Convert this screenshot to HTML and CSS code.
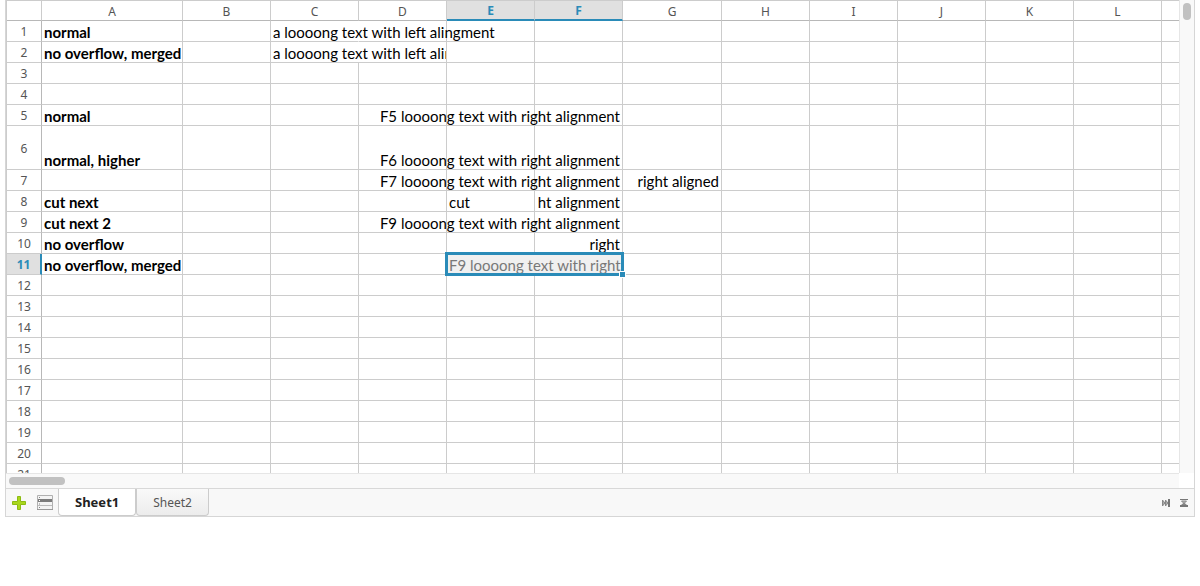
FILE: index.html
```html
<!DOCTYPE html>
<html lang="en">
<head>
<meta charset="utf-8">
<title>Spreadsheet</title>
<link rel="stylesheet" href="styles.css">
</head>
<body>
<main class="book">
  <div class="work">
    <div class="view">
      <table class="grid">
        <colgroup id="cols"></colgroup>
        <thead><tr id="head"></tr></thead>
        <tbody id="rows"></tbody>
      </table>
    </div>
    <div class="vscroll"><div class="vthumb"></div></div>
  </div>
  <div class="hrow">
    <div class="hscroll"><div class="hthumb"></div></div>
  </div>
  <footer class="bar">
    <button class="tool" aria-label="Add sheet">
      <svg width="14" height="14" viewBox="0 0 14 14"><path d="M5.500 .5h3v5h5v3h-5v5h-3v-5h-5v-3h5z" fill="#a9d71c" stroke="#8dbb12"/></svg>
    </button>
    <button class="tool list" aria-label="Sheet list">
      <svg width="16" height="15" viewBox="0 0 16 15"><path d="M.5.5h15v14H.5z" fill="#f4f4f4" stroke="#b0b0b0"/><path d="M1 4h14v3H1z" fill="#7c7c7c"/><path d="M1 10.500h14" stroke="#bbb"/><path d="M2 2.500h1M2 9h1M2 12.500h1" stroke="#888"/><path d="M2 5.500h1" stroke="#fff"/><path d="M0 14.500h16" stroke="#999"/></svg>
    </button>
    <nav class="tabs">
      <button class="tab active">Sheet1</button>
      <button class="tab">Sheet2</button>
    </nav>
    <div class="right">
      <button class="tool" aria-label="Last sheet">
        <svg width="8" height="8" viewBox="0 0 8 8"><path d="M.5 1v6L3 4zM3.500 1v6L6 4z" fill="#aaa" stroke="#888"/><path d="M7 0v8" stroke="#777" stroke-width="2"/></svg>
      </button>
      <button class="tool" aria-label="Collapse">
        <svg width="8" height="8" viewBox="0 0 8 8"><path d="M0 .5h8" stroke="#777"/><path d="M1.500 2h5L4 4.500z" fill="#bbb" stroke="#888"/><path d="M4 3.500L7 6H1z" fill="#888"/><path d="M0 7h8" stroke="#777" stroke-width="2"/></svg>
      </button>
    </div>
  </footer>
</main>
<script src="script.js"></script>
</body>
</html>
```

FILE: styles.css
```css
* { box-sizing: border-box; }

body {
  margin: 0;
  padding: 0 5px;
  background: #fff;
  font-family: "Noto Sans", sans-serif;
  font-size: 12px;
  color: #555;
}

button {
  margin: 0;
  padding: 0;
  border: 0;
  background: none;
  font: inherit;
  color: inherit;
}

.book {
  display: flex;
  flex-direction: column;
  height: calc(100vh - 69px);
  min-height: 200px;
  border: 1px solid #d6d6d6;
  border-top: 0;
  background: #f8f8f8;
}

.work {
  display: flex;
  flex: 1;
  min-height: 0;
}

.view {
  flex: 1;
  min-width: 0;
  overflow: hidden;
  border-left: 1px solid #ccc;
  background: #fff;
}

.vscroll {
  width: 15px;
  padding: 3px 3px 0;
  border-left: 1px solid #e6e6e6;
  background: #f9f9f9;
}

.vthumb {
  width: 8px;
  height: 17px;
  border-radius: 4px;
  background: #c1c1c1;
}

.hrow {
  padding-right: 15px;
  background: #fff;
}

.hscroll {
  height: 15px;
  padding: 3px 3px 0;
  border-top: 1px solid #e6e6e6;
  background: #f9f9f9;
}

.hthumb {
  width: 56px;
  height: 8px;
  border-radius: 4px;
  background: #c1c1c1;
}

.grid {
  width: 1243px;
  table-layout: fixed;
  border-collapse: separate;
  border-spacing: 0;
}

.grid th,
.grid td {
  height: 21px;
  padding: 0;
  border-right: 1px solid #ccc;
  border-bottom: 1px solid #ccc;
  line-height: 20px;
}

.grid th {
  font-weight: 400;
  text-align: center;
}

.grid thead th {
  padding-top: 2px;
  border-top: 1px solid #ccc;
  border-bottom-color: #b8b8b8;
  line-height: 16px;
}

.grid tbody th {
  padding-top: 1px;
  border-right-color: #b8b8b8;
  line-height: 19px;
}

.grid th.on {
  background: #e0e0e0;
  color: #2a8bb8;
  font-weight: 700;
}

.grid thead th.on { border-bottom: 2px solid #2a8bb8; }
.grid tbody th.on { border-right: 2px solid #2a8bb8; }

.grid td {
  vertical-align: bottom;
  font-family: Lato, sans-serif;
  font-size: 15px;
  color: #000;
}

.grid tr.tall > * { height: 44px; }

.grid td.open { border-right-color: transparent; }
.grid td.current { position: relative; }

.text {
  display: flex;
  height: 20px;
  padding: 1px 2px 0;
  line-height: 20px;
  white-space: nowrap;
}

.bold { font-weight: 700; }
.right-text { justify-content: flex-end; }
.cut { overflow: hidden; }

.picked {
  position: absolute;
  inset: -2px;
  border: 3px solid #2a8bb8;
  background: rgba(128, 128, 128, .12);
}

.handle {
  position: absolute;
  right: -4px;
  bottom: -4px;
  width: 5px;
  height: 5px;
  outline: 1px solid #fff;
  background: #2a8bb8;
}

.muted { color: #777; }

.bar {
  display: flex;
  height: 28px;
  padding-left: 5px;
  border-top: 1px solid #d8d8d8;
}

.tool {
  display: flex;
  align-items: center;
  justify-content: center;
  width: 16px;
  margin-right: 10px;
}

.list { margin-right: 5px; }

.tabs {
  display: flex;
  height: 28px;
}

.tab {
  height: 27px;
  padding: 0 16px;
  border: 1px solid #ccc;
  border-top: 0;
  border-radius: 0 0 4px 4px;
  background: linear-gradient(#f9f9f9, #ececec);
}

.tab.active {
  background: #fff;
  color: #222;
  font-size: 13px;
  font-weight: 700;
}

.right {
  display: flex;
  gap: 2px;
  margin-left: auto;
  padding-right: 2px;
}

.right .tool { margin: 0; }
```

FILE: script.js
```js
const letters = "ABCDEFGHIJKL".split("");
const widths = [35, 141, 88, 88, 88, 88, 88, 99, 88, 88, 88, 88, 88, 88];

const cells = {
  A1: { t: "normal", c: "bold" },
  C1: { t: "a loooong text with left alingment", open: true },
  A2: { t: "no overflow, merged", c: "bold" },
  C2: { t: "a loooong text with left alingment", c: "cut", span: 2 },
  A5: { t: "normal", c: "bold" },
  F5: { t: "F5 loooong text with right alignment", c: "right-text" },
  A6: { t: "normal, higher", c: "bold" },
  F6: { t: "F6 loooong text with right alignment", c: "right-text" },
  F7: { t: "F7 loooong text with right alignment", c: "right-text" },
  G7: { t: "right aligned", c: "right-text" },
  A8: { t: "cut next", c: "bold" },
  E8: { t: "cut" },
  F8: { t: "ht alignment", c: "right-text cut" },
  A9: { t: "cut next 2", c: "bold" },
  F9: { t: "F9 loooong text with right alignment", c: "right-text" },
  A10: { t: "no overflow", c: "bold" },
  F10: { t: "right", c: "right-text" },
  A11: { t: "no overflow, merged", c: "bold" },
  E11: { t: "F9 loooong text with right", c: "cut muted", span: 2, picked: true }
};

document.getElementById("cols").innerHTML =
  widths.map(w => `<col style="width:${w}px">`).join("");

document.getElementById("head").innerHTML = "<th></th>" +
  letters.map(l => `<th scope="col" class="${l === "E" || l === "F" ? "on" : ""}">${l}</th>`).join("") + "<th></th>";

let html = "";
for (let r = 1; r <= 21; r++) {
  html += `<tr class="${r === 6 ? "tall" : ""}"><th scope="row" class="${r === 11 ? "on" : ""}">${r}</th>`;
  for (let i = 0; i < letters.length; i++) {
    const cell = cells[letters[i] + r];
    if (!cell) {
      html += "<td></td>";
      continue;
    }
    html += `<td colspan="${cell.span || 1}" class="${cell.open ? "open" : ""}${cell.picked ? "current" : ""}">` +
      `<div class="text ${cell.c || ""}">${cell.t}</div>` +
      (cell.picked ? '<div class="picked"><span class="handle"></span></div>' : "") + "</td>";
    i += (cell.span || 1) - 1;
  }
  html += "<td></td></tr>";
}
document.getElementById("rows").innerHTML = html;
```
